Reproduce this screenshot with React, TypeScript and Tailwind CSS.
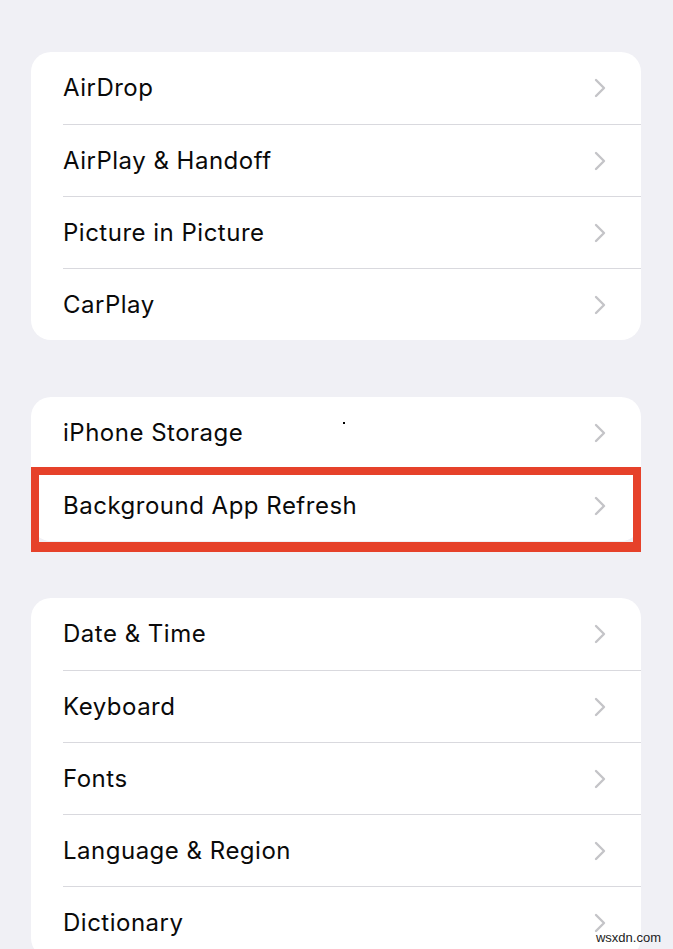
import React from "react"

const groups = [
  ["AirDrop", "AirPlay & Handoff", "Picture in Picture", "CarPlay"],
  ["iPhone Storage", "Background App Refresh"],
  ["Date & Time", "Keyboard", "Fonts", "Language & Region", "Dictionary"],
]

function Chevron() {
  return (
    <svg width="14" height="20" viewBox="0 0 14 20" fill="none" className="shrink-0">
      <path d="M3 2 L11 10 L3 18" stroke="#c4c4c8" strokeWidth="2.4" strokeLinecap="round" strokeLinejoin="round" />
    </svg>
  )
}

function Row({ label, first, highlight }: { label: string; first: boolean; highlight?: boolean }) {
  return (
    <div className="relative h-[72px] pl-8">
      <div className={`flex h-full items-center pr-[34px] ${first ? "" : "border-t border-[#d9d9de]"}`}>
        <span className="flex-1 text-[24px] tracking-[0.5px] text-[#0a0a0a]">{label}</span>
        <Chevron />
      </div>
      {highlight && (
        <div className="absolute left-0 right-0 top-[-2px] bottom-[-11px] border-[8px] border-b-[10px] border-[#e6412a]" />
      )}
    </div>
  )
}

export default function App() {
  return (
    <div
      className="relative h-[949px] overflow-hidden bg-[#f0f0f5] pt-[52px] pl-[31px] pr-[32px]"
      style={{ fontFamily: "Inter, 'Liberation Sans', sans-serif" }}
    >
      <div className="flex flex-col gap-[57px]">
        {groups.map((g, gi) => (
          <div key={gi} className="rounded-[20px] bg-white">
            {g.map((label, i) => (
              <Row key={label} label={label} first={i === 0} highlight={label === "Background App Refresh"} />
            ))}
          </div>
        ))}
      </div>
      <div className="absolute left-[343px] top-[422px] h-[2px] w-[2px] bg-black" />
      <div className="absolute right-[12px] bottom-[2px] text-[13px] text-[#222]" style={{ fontFamily: "'Liberation Sans', sans-serif" }}>
        wsxdn.com
      </div>
    </div>
  )
}
